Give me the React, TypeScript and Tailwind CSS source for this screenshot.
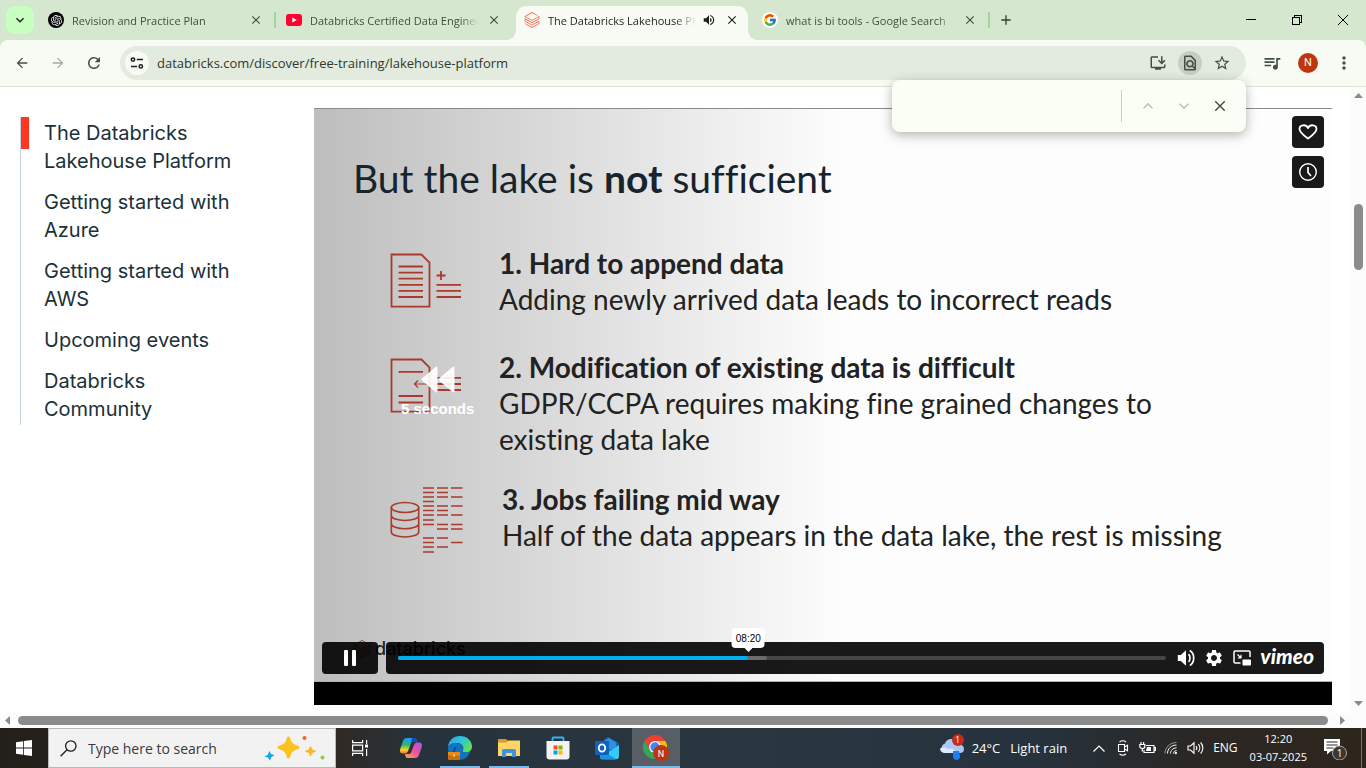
import React from "react";
import type { ReactNode } from "react";
import { FcGoogle } from "react-icons/fc";
import { SiDatabricks, SiOpenai } from "react-icons/si";
import {
  MdArrowBack,
  MdArrowForward,
  MdClose,
  MdInstallDesktop,
  MdKeyboardArrowDown,
  MdKeyboardArrowUp,
  MdMoreVert,
  MdOutlineFindInPage,
  MdQueueMusic,
  MdRefresh,
  MdSettings,
  MdStarBorder,
  MdVolumeUp,
  MdAdd,
} from "react-icons/md";

const UI_FONT = "font-['Open_Sans','Noto_Sans',sans-serif]";

type TabProps = {
  icon: ReactNode;
  title: string;
  active?: boolean;
  audio?: boolean;
  divider?: boolean;
};

function Tab({ icon, title, active, audio, divider }: TabProps) {
  return (
    <div className="flex h-[34px] max-w-[238px] min-w-0 flex-1 items-center">
      <div
        className={
          active
            ? "relative flex h-full min-w-0 flex-1 items-center rounded-t-[10px] bg-[#f8fbf3] pr-2 pl-2 text-[#1c211b]"
            : "relative flex h-full min-w-0 flex-1 items-center pr-2 pb-1.5 pl-2 text-[#41503f]"
        }
      >
        {active && (
          <>
            <span className="absolute bottom-0 -left-2.5 size-2.5 bg-[radial-gradient(circle_at_0_0,transparent_10px,#f8fbf3_10px)]" />
            <span className="absolute -right-2.5 bottom-0 size-2.5 bg-[radial-gradient(circle_at_100%_0,transparent_10px,#f8fbf3_10px)]" />
          </>
        )}
        <span className={active ? "mb-1.5 flex size-4 shrink-0 items-center justify-center" : "flex size-4 shrink-0 items-center justify-center"}>
          {icon}
        </span>
        <span
          className={
            active
              ? "mb-1 ml-2 min-w-0 flex-1 overflow-hidden text-[11px] leading-4 whitespace-nowrap [mask-image:linear-gradient(to_right,black_86%,transparent)]"
              : "ml-2 min-w-0 flex-1 overflow-hidden pt-0.5 text-[11px] leading-4 whitespace-nowrap [mask-image:linear-gradient(to_right,black_90%,transparent)]"
          }
        >
          {title}
        </span>
        {audio && <MdVolumeUp className="mb-1.5 ml-1.5 size-3.5 shrink-0" />}
        <button
          aria-label={`Close ${title}`}
          className={active ? "mb-1.5 ml-2 flex size-4 shrink-0 items-center justify-center" : "ml-2 flex size-4 shrink-0 items-center justify-center"}
        >
          <MdClose className="size-3.5" />
        </button>
      </div>
      <span className={divider ? "mr-0.5 mb-1.5 ml-0.5 h-4 w-0.5 bg-[#a0d997]" : "w-1.5"} />
    </div>
  );
}

function TabStrip() {
  return (
    <div className="flex h-10 shrink-0 items-end bg-[#d6e7d0] pl-1.5">
      <button aria-label="Search tabs" className="mr-1.5 mb-1.5 flex size-7 shrink-0 items-center justify-center rounded-[9px] bg-[#c8ffc0] text-[#1c211b]">
        <MdKeyboardArrowDown className="size-4" />
      </button>
      <Tab
        title="Revision and Practice Plan"
        divider
        icon={
          <span className="flex size-4 items-center justify-center rounded-full bg-black text-white">
            <SiOpenai className="size-[11px]" />
          </span>
        }
      />
      <Tab
        title="Databricks Certified Data Engineer"
        icon={
          <svg viewBox="0 0 16 12" className="h-3 w-4">
            <rect width="16" height="12" rx="3" fill="#ff0033" />
            <path d="M6.3 3.4v5.2L10.8 6z" fill="#fff" />
          </svg>
        }
      />
      <Tab title="The Databricks Lakehouse Platform" active audio icon={<SiDatabricks className="size-4 text-[#ff5f46]" />} />
      <Tab
        title="what is bi tools - Google Search"
        divider
        icon={
          <span className="flex size-4 items-center justify-center rounded-full bg-white">
            <FcGoogle className="size-3.5" />
          </span>
        }
      />
      <button aria-label="New tab" className="mb-1.5 flex size-7 shrink-0 items-center justify-center text-[#33402f]">
        <MdAdd className="size-4" />
      </button>
      <div className="ml-auto flex self-stretch">
        <button aria-label="Minimize" className="flex w-[46px] items-center justify-center">
          <svg viewBox="0 0 10 10" className="size-2.5" shapeRendering="crispEdges">
            <path d="M0 4.5h10" stroke="#000" fill="none" />
          </svg>
        </button>
        <button aria-label="Restore" className="flex w-[46px] items-center justify-center">
          <svg viewBox="0 0 10 10" className="size-2.5" shapeRendering="crispEdges">
            <path d="M.5 2.5h7v7h-7zM2.5 2.5v-2h7v7h-2" stroke="#000" fill="none" />
          </svg>
        </button>
        <button aria-label="Close window" className="flex w-[46px] items-center justify-center">
          <svg viewBox="0 0 10 10" className="size-2.5">
            <path d="M0 0l10 10M10 0L0 10" stroke="#000" fill="none" />
          </svg>
        </button>
      </div>
    </div>
  );
}

function FindBar() {
  return (
    <div className="absolute top-10 right-[120px] z-20 flex h-[52px] w-[354px] items-center rounded-lg bg-[#fbfef5] pr-2 shadow-[0_3px_12px_rgba(0,0,0,0.3)]">
      <input aria-label="Find in page" className="h-8 min-w-0 flex-1 bg-transparent px-4 text-xs outline-none" />
      <span className="mr-2 h-8 w-px bg-[#a9e5a2]" />
      <button aria-label="Previous match" className="flex size-9 items-center justify-center text-[#bdc2ba]">
        <MdKeyboardArrowUp className="size-5" />
      </button>
      <button aria-label="Next match" className="flex size-9 items-center justify-center text-[#bdc2ba]">
        <MdKeyboardArrowDown className="size-5" />
      </button>
      <button aria-label="Close find bar" className="flex size-9 items-center justify-center text-[#4c514a]">
        <MdClose className="size-[18px]" />
      </button>
    </div>
  );
}

function Toolbar() {
  return (
    <div className="bg-[#d6e7d0]">
      <div className="relative flex h-[47px] shrink-0 items-center rounded-t-lg border-b border-[#d6e7d0] bg-[#f8fbf3] pl-1 text-[#41503f]">
        <button aria-label="Back" className="flex size-9 items-center justify-center">
          <MdArrowBack className="size-4" />
        </button>
        <button aria-label="Forward" className="flex size-9 items-center justify-center text-[#a5aca2]">
          <MdArrowForward className="size-4" />
        </button>
        <button aria-label="Reload" className="flex size-9 items-center justify-center">
          <MdRefresh className="size-[18px]" />
        </button>
        <div className="ml-2 flex h-[34px] min-w-0 flex-1 items-center rounded-full bg-[#e3ebdf] pr-2 pl-[5px]">
          <button aria-label="View site information" className="flex size-6 shrink-0 items-center justify-center rounded-full bg-[#f8fbf3] text-[#1c211b]">
            <svg viewBox="0 0 14 14" className="size-3.5" fill="none" stroke="currentColor" strokeWidth="1.5">
              <circle cx="3" cy="3.6" r="1.7" />
              <path d="M6.8 3.6H13M1 10.4h6" />
              <circle cx="10.8" cy="10.4" r="1.7" />
            </svg>
          </button>
          <input
            aria-label="Address"
            defaultValue="databricks.com/discover/free-training/lakehouse-platform"
            className="ml-2 min-w-0 flex-1 bg-transparent pt-px text-[13px] text-[#30382e] outline-none"
          />
          <button aria-label="Install page as app" className="flex size-8 items-center justify-center">
            <MdInstallDesktop className="size-[18px]" />
          </button>
          <button aria-label="Find" className="flex size-8 items-center justify-center">
            <span className="flex size-6 items-center justify-center rounded-full bg-[#c6cec2]">
              <MdOutlineFindInPage className="size-[18px]" />
            </span>
          </button>
          <button aria-label="Bookmark" className="flex size-8 items-center justify-center">
            <MdStarBorder className="size-[18px]" />
          </button>
        </div>
        <button aria-label="Media controls" className="ml-2 flex size-9 items-center justify-center">
          <MdQueueMusic className="size-5" />
        </button>
        <button aria-label="Profile" className="flex size-9 items-center justify-center">
          <span className="flex size-5 items-center justify-center rounded-full bg-[#bf360c] font-['Roboto',sans-serif] text-[11px] text-white">N</span>
        </button>
        <button aria-label="Menu" className="mr-1 flex size-9 items-center justify-center">
          <MdMoreVert className="size-5" />
        </button>
        <FindBar />
      </div>
    </div>
  );
}

const SECTIONS = [
  ["The Databricks", "Lakehouse Platform"],
  ["Getting started with", "Azure"],
  ["Getting started with", "AWS"],
  ["Upcoming events"],
  ["Databricks", "Community"],
];

function SideNav() {
  return (
    <nav className="w-[314px] shrink-0 pt-[30px] pl-5">
      <ul className="relative flex flex-col gap-[13px] border-l border-[#c4d6e0] pt-0.5 pb-0.5 pl-[23px] font-['Inter',sans-serif] text-[20px] leading-7 text-[#1b3139]">
        <li className="absolute top-0 left-0 h-8 w-2 bg-[#ff3621]" aria-hidden="true" />
        {SECTIONS.map((lines, i) => (
          <li key={i}>
            <a href="#section">
              {lines.map((line) => (
                <span key={line} className="block">
                  {line}
                </span>
              ))}
            </a>
          </li>
        ))}
      </ul>
    </nav>
  );
}

function AppendIcon() {
  return (
    <svg viewBox="0 0 74 57" className="h-[57px] w-[74px]" fill="none" stroke="#a93a2c" strokeWidth="1.8">
      <path d="M1.5 1.5h30l8 8v44.200h-38z" />
      <path d="M8.500 13.500h24.500M8.500 19.600h24.500M8.500 25.700h24.500M8.500 31.800h24.500M8.500 37.900h24.500M8.500 44h24.500M46.500 31.800h24.500M46.500 37.900h24.500M46.500 44h24.500M46.500 22.500h9M51 18v9" />
    </svg>
  );
}

function ModifyIcon() {
  return (
    <svg viewBox="0 0 74 57" className="h-[57px] w-[74px]" fill="none" stroke="#a93a2c" strokeWidth="1.8">
      <path d="M1.500 1.500h30l8 8v44.200h-38z" />
      <path d="M8.500 13.800h24.500M8.500 38h24.500M8.500 44.500h24.500M46.500 19.800h24.500M46.500 26h24.500M46.500 32h24.500" />
      <path d="M25 26h21M28 22.500L24.500 26l3.500 3.500" strokeWidth="1.200" />
    </svg>
  );
}

function JobsIcon() {
  return (
    <svg viewBox="0 0 74 68" className="h-[68px] w-[74px]" fill="none" stroke="#a93a2c" strokeWidth="1.600">
      <ellipse cx="15" cy="21.500" rx="13.700" ry="5" />
      <path d="M1.300 21.500v24.500c0 2.800 6 5 13.700 5s13.700-2.200 13.700-5V21.500M1.300 29.500c0 2.800 6 5 13.700 5s13.700-2.200 13.700-5M1.300 37.800c0 2.800 6 5 13.700 5s13.700-2.200 13.700-5" />
      <path d="M33 2h11M33 6.500h11M33 11h11M33 15.500h11M33 20h11M33 24.500h11M33 29h11M33 34h11M33 38.500h11M33 52h11M33 56.500h11M33 61h11M33 66h11" />
      <path d="M47 2h11M47 6.500h11M47 11h11M47 20h11M47 24.500h11M47 29h11M47 38.500h11M47 43h11M47 52h11M47 61h11" />
      <path d="M61 2h11.500M61 11h11.500M61 20h11.500M61 29h11.500M61 38.500h11.500M61 43h11.500M61 56.500h11.500" />
    </svg>
  );
}

function Controls() {
  return (
    <div className="relative z-10 flex h-8 gap-2 px-2">
      <button aria-label="Pause" className="flex w-14 items-center justify-center rounded bg-black/90">
        <svg viewBox="0 0 12 16" className="h-4 w-3" fill="#fff">
          <rect width="4" height="16" rx="1" />
          <rect x="8" width="4" height="16" rx="1" />
        </svg>
      </button>
      <div className="flex flex-1 items-center rounded bg-black/90 pr-2.5 pl-3 text-white">
        <div className="relative h-1 flex-1 rounded-full bg-[#464646]">
          <div className="absolute inset-y-0 left-0 w-[48%] rounded-full bg-[#6b6b6b]" />
          <div className="absolute inset-y-0 left-0 w-[45.6%] rounded-full bg-[#00adef]">
            <div className="absolute right-0 bottom-2 flex translate-x-1/2 flex-col items-center">
              <span className="flex h-5 items-center rounded bg-white px-1 font-['Liberation_Sans',sans-serif] text-[10px] text-black">08:20</span>
              <svg viewBox="0 0 8 4" className="h-1 w-2" fill="#fff">
                <path d="M0 0h8L4 4z" />
              </svg>
            </div>
          </div>
          <input type="range" min={0} max={1097} defaultValue={500} aria-label="Seek" className="absolute inset-0 h-full w-full cursor-pointer opacity-0" />
        </div>
        <button aria-label="Volume" className="ml-2.5 flex size-5 items-center justify-center">
          <svg viewBox="0 0 18 18" className="size-[18px]" fill="none">
            <path d="M.8 6h3L9 1.200v15.600L3.800 12h-3z" fill="#fff" />
            <path d="M11.500 5.200c2 1.500 2 6.100 0 7.600M12.800 1.500c5.200 3 5.200 12 0 15" stroke="#fff" strokeWidth="1.700" />
          </svg>
        </button>
        <button aria-label="Settings" className="ml-2 flex size-5 items-center justify-center">
          <MdSettings className="size-5" />
        </button>
        <button aria-label="Picture in picture" className="ml-2 flex size-5 items-center justify-center">
          <svg viewBox="0 0 18 16" className="h-4 w-[18px]" fill="none" stroke="#fff" strokeWidth="1.500">
            <path d="M7.500 13H2.200C1.300 13 1 12.600 1 12V2c0-.6.400-1 1-1h14c.6 0 1 .4 1 1v5" />
            <path d="M4.500 4.500L8 8M8 4.800V8H4.800" strokeWidth="1.200" />
            <rect x="9.500" y="9.500" width="8.500" height="6" rx=".8" fill="#fff" stroke="none" />
          </svg>
        </button>
        <a href="#vimeo" className="ml-2 pb-1 font-['Lato',sans-serif] text-[21px] leading-6 font-black italic">
          vimeo
        </a>
      </div>
    </div>
  );
}

function Slide() {
  return (
    <div className="relative border-t border-b border-t-[#8a8a8a] border-b-[#b0b0b0] bg-[#fdfdfd] bg-[linear-gradient(to_right,rgba(0,0,0,0.25),transparent_52%)] pb-[7px] font-['Lato',sans-serif] text-[#222] [font-variant-ligatures:none]">
      <div className="pt-[45px] pl-[39px]">
        <h1 className="text-[39px] leading-[48px] text-[#17242b]">
          But the lake is <strong className="font-bold">not</strong> sufficient
        </h1>
      </div>
      <div className="flex flex-col pt-[43px] pl-[76px] text-[28px] leading-9">
        <div className="flex">
          <div className="w-[109px] shrink-0 pt-2">
            <AppendIcon />
          </div>
          <div>
            <h2 className="font-bold">1. Hard to append data</h2>
            <p>Adding newly arrived data leads to incorrect reads</p>
          </div>
        </div>
        <div className="mt-8 flex">
          <div className="relative w-[109px] shrink-0 pt-[9px]">
            <ModifyIcon />
            <div className="absolute top-[17px] left-[11px] flex flex-col items-center text-white">
              <svg viewBox="0 0 34 27" className="h-[27px] w-[34px]" fill="#fff" stroke="#fff" strokeWidth="2" strokeLinejoin="round">
                <path d="M15.500 1.500v24L1.200 13.500zM32.500 1.500v24L18.200 13.500z" fillOpacity=".9" strokeOpacity=".9" />
              </svg>
              <span className="mt-1 font-['Liberation_Sans',sans-serif] text-[15px] leading-6 font-bold whitespace-nowrap">5 seconds</span>
            </div>
          </div>
          <div>
            <h2 className="font-bold">2. Modification of existing data is difficult</h2>
            <p>
              GDPR/CCPA requires making fine grained changes to
              <br />
              existing data lake
            </p>
          </div>
        </div>
        <div className="mt-6 flex">
          <div className="w-28 shrink-0 pt-[5px]">
            <JobsIcon />
          </div>
          <div>
            <h2 className="font-bold">3. Jobs failing mid way</h2>
            <p>Half of the data appears in the data lake, the rest is missing</p>
          </div>
        </div>
      </div>
      <div className="absolute bottom-5 left-[39px] flex items-center gap-1 font-['Inter',sans-serif] text-[18px] leading-6 font-medium">
        <SiDatabricks className="size-[18px] text-[#a93a2c]" />
        databricks
      </div>
      <div className="pt-[88px]">
        <Controls />
      </div>
      <div className="absolute top-[7px] right-2 flex flex-col gap-2">
        <button aria-label="Like" className="flex size-8 items-center justify-center rounded bg-black/90">
          <svg viewBox="0 0 20 16" className="h-4 w-5" fill="none" stroke="#fff" strokeWidth="1.800" strokeLinejoin="round">
            <path d="M10 14.500C6 11.500 1.500 8.500 1.500 5c0-4.500 6.500-5 8.500-1 2-4 8.500-3.500 8.500 1 0 3.500-4.500 6.500-8.500 9.500z" />
          </svg>
        </button>
        <button aria-label="Watch later" className="flex size-8 items-center justify-center rounded bg-black/90">
          <svg viewBox="0 0 20 20" className="size-5" fill="none" stroke="#fff">
            <circle cx="10" cy="10" r="8.300" strokeWidth="1.400" />
            <path d="M10 5v5.500l3 3.500" strokeWidth="1.700" />
          </svg>
        </button>
      </div>
    </div>
  );
}

function Page() {
  return (
    <div className="flex min-h-0 flex-1">
      <div className="flex min-w-0 flex-1 flex-col">
        <main className="flex min-h-0 flex-1 overflow-hidden bg-white">
          <SideNav />
          <section aria-label="Video" className="mr-[19px] min-w-0 flex-1 pt-[21px]">
            <Slide />
            <div className="h-[23px] bg-black" />
          </section>
        </main>
        <div className="flex h-[15px] shrink-0 items-center bg-[#fcfcfc] pr-1.5 pl-[5px]">
          <svg viewBox="0 0 5 9" className="h-[9px] w-[5px]" fill="#8b8b8b">
            <path d="M5 0v9L0 4.500z" />
          </svg>
          <div className="mr-3 ml-2 h-[9px] flex-1 rounded-full bg-[#8b8b8b]" />
          <svg viewBox="0 0 5 9" className="h-[9px] w-[5px]" fill="#8b8b8b">
            <path d="M0 0v9l5-4.500z" />
          </svg>
        </div>
      </div>
      <div className="flex w-[15px] shrink-0 flex-col items-center bg-[#fcfcfc] pt-1.5 pb-[22px]">
        <svg viewBox="0 0 9 5" className="h-[5px] w-[9px]" fill="#8b8b8b">
          <path d="M0 5h9L4.500 0z" />
        </svg>
        <div className="mt-[106px] h-[66px] w-[9px] rounded-full bg-[#8b8b8b]" />
        <svg viewBox="0 0 9 5" className="mt-auto h-[5px] w-[9px]" fill="#8b8b8b">
          <path d="M0 0h9L4.500 5z" />
        </svg>
      </div>
    </div>
  );
}

function TaskButton({ label, open, current, children }: { label: string; open?: boolean; current?: boolean; children: ReactNode }) {
  return (
    <button
      aria-label={label}
      className={
        current
          ? "relative flex w-12 items-center justify-center border-b-2 border-[#76b9ed] bg-[#575e66] pt-0.5"
          : "relative flex w-12 items-center justify-center"
      }
    >
      {children}
      {open && <span className="absolute inset-x-1 bottom-0 h-0.5 bg-[#76b9ed]" />}
    </button>
  );
}

function TaskbarIcons() {
  return (
    <div className="flex">
      <TaskButton label="Task view">
        <svg viewBox="0 0 16 16" className="size-4" fill="none" stroke="#fff" strokeWidth="1.200">
          <path d="M.6 0v2.600h10V0M.6 16v-2.600h10V16M.6 5.200h10v5.600H.6zM14.600 0v4M14.600 9v7" />
          <path d="M13 4.500h3v3h-3z" fill="#fff" stroke="none" />
        </svg>
      </TaskButton>
      <div className="ml-[3px] flex gap-px">
        <TaskButton label="Copilot">
          <svg viewBox="0 0 24 24" className="size-6">
            <defs>
              <linearGradient id="cpA" x1="0" y1="0" x2="0" y2="1">
                <stop offset="0" stopColor="#1aa0f5" />
                <stop offset=".45" stopColor="#2bb673" />
                <stop offset=".75" stopColor="#f5d327" />
                <stop offset="1" stopColor="#f37a2b" />
              </linearGradient>
              <linearGradient id="cpB" x1="1" y1="0" x2="0" y2="1">
                <stop offset="0" stopColor="#9a5cf5" />
                <stop offset=".5" stopColor="#f0509a" />
                <stop offset="1" stopColor="#ffb040" />
              </linearGradient>
            </defs>
            <path d="M8 2h7c2 0 2.500 1.500 3 4h-4c-1.500 0-2 1-2.500 2.500L9 15c-.6 1.600-1.500 2.500-3 2.500H4C1.500 17.500.5 16 1.200 13L4 5c.7-2 1.800-3 4-3z" fill="url(#cpA)" />
            <path d="M13 2h2c2 0 2.500 1.500 3 4h-4c-1.500 0-2 1-2.500 2z" fill="#1649c8" />
            <path d="M16 22H9c-2 0-2.500-1.500-3-4h4c1.500 0 2-1 2.500-2.500L15 9c.6-1.600 1.500-2.500 3-2.500h2c2.500 0 3.500 1.500 2.800 4.500L20 19c-.7 2-1.800 3-4 3z" fill="url(#cpB)" />
          </svg>
        </TaskButton>
        <TaskButton label="Microsoft Edge" open>
          <svg viewBox="0 0 24 24" className="size-6">
            <defs>
              <linearGradient id="edA" x1="0" y1="0" x2="1" y2=".5">
                <stop offset="0" stopColor="#2aa7e8" />
                <stop offset=".6" stopColor="#2fc6d6" />
                <stop offset="1" stopColor="#5fe05a" />
              </linearGradient>
            </defs>
            <path d="M0 11C.500 4.500 5.500 0 12 0c7 0 12 5 12 10.500 0 4-3 6-6 6-2.500 0-4-1-3.500-2 .8-1 .8-1.500.8-2.500 0-3-3-5-7-5C4.500 7 1.500 8.500 0 11z" fill="url(#edA)" />
            <path d="M0 11c1.500-3 4.500-4.200 8-4 4 .2 7 2 7 5 0 1-.2 1.500-.8 2.200-.3 1 1.300 2.300 3.800 2.300 1.500 0 3-.3 4.300-1.500C20.500 20.500 17 24 11.500 24 5 24-.5 18.500 0 11z" fill="#1273c4" />
            <path d="M9 10.500c-3 2.500-2.500 10 4 13.400C6 24 3.500 19 4.500 15c.6-2.500 2.500-4.200 4.500-4.500z" fill="#0d4f96" />
            <rect y="16" width="12" height="8" rx="1" fill="#c96f0c" />
            <path d="M0 16h12v3.500H0z" fill="#e68a18" />
            <path d="M5 18.500h2v2H5z" fill="#ffd14a" />
          </svg>
        </TaskButton>
        <TaskButton label="File Explorer" open>
          <svg viewBox="0 0 22 18" className="h-[18px] w-[22px]">
            <path d="M0 0h8l2 2v3H0z" fill="#dd9a16" />
            <path d="M0 3.500h8.500l1.500-2h12V17H0z" fill="#ffd666" />
            <path d="M4 18v-6c0-1.200.8-2 2-2h10c1.200 0 2 .8 2 2v6h-4v-4H8v4z" fill="#3f94dd" />
          </svg>
        </TaskButton>
        <TaskButton label="Microsoft Store">
          <svg viewBox="0 0 24 24" className="size-6">
            <path d="M6.500 6V2.500c0-.6.400-1 1-1h9c.6 0 1 .4 1 1V6" fill="none" stroke="#35b4ee" strokeWidth="1.800" />
            <path d="M.5 5h23v15.500c0 1.700-1 3-3 3h-17c-2 0-3-1.300-3-3z" fill="#f3f3f3" />
            <path d="M7.500 9.500h4v4h-4z" fill="#f25022" />
            <path d="M12.500 9.500h4v4h-4z" fill="#7fba00" />
            <path d="M7.500 14.500h4v4h-4z" fill="#00a4ef" />
            <path d="M12.500 14.500h4v4h-4z" fill="#ffb900" />
          </svg>
        </TaskButton>
        <TaskButton label="Outlook">
          <svg viewBox="0 0 24 24" className="size-6">
            <path d="M4 8L13 1l10.500 6v4L14 18 4 12z" fill="#1668bd" />
            <path d="M8 5.500l6-3.500 7 4.500v7H8z" fill="#2f8fe0" />
            <path d="M5 21.500L24 9v11c0 2-1 3.300-3 3.300H7.500c-1.500 0-2.500-.8-2.500-1.800z" fill="#38c8f5" />
            <path d="M5 13l16 10.200c-.5.300-12 .3-13.500.1-1.500 0-2.500-.8-2.500-1.800z" fill="#1a94e0" />
            <rect y="5" width="14" height="14" rx="1" fill="#0f62b8" />
            <ellipse cx="7" cy="12" rx="3.200" ry="3.700" fill="none" stroke="#fff" strokeWidth="1.800" />
          </svg>
        </TaskButton>
        <TaskButton label="Google Chrome" current>
          <svg viewBox="0 0 26 26" className="size-[26px]">
            <path d="M1.600 6A12 12 0 0 1 22.400 6H12a6 6 0 0 0-5.200 9z" fill="#ea4335" />
            <path d="M22.400 6A12 12 0 0 1 12 24l5.200-9A6 6 0 0 0 12 6z" fill="#fbbc04" />
            <path d="M12 24A12 12 0 0 1 1.600 6l5.200 9a6 6 0 0 0 8.400 2.200z" fill="#34a853" />
            <circle cx="12" cy="12" r="6" fill="#fff" />
            <circle cx="12" cy="12" r="4.700" fill="#4285f4" />
            <circle cx="18" cy="18" r="8" fill="#bf360c" />
            <text x="18" y="21.500" textAnchor="middle" fontSize="9" fontFamily="Roboto, sans-serif" fill="#fff">
              N
            </text>
          </svg>
        </TaskButton>
      </div>
    </div>
  );
}

function Tray() {
  return (
    <div className="ml-auto flex items-center text-white">
      <button aria-label="Weather" className="flex items-center">
        <span className="relative mr-2 flex">
          <svg viewBox="0 0 24 24" className="size-6">
            <path d="M5 17a5 5 0 0 1 0-9.500C6 4 9 2.500 12 3c3 .3 5 2.500 5.500 5 4 0 6.500 2 6.500 5s-2 4-4 4z" fill="#a9c8f8" />
            <path d="M4 17c-3-.5-4-2.500-4-4.500 3-2 7-1 8.500 1 2-2 6-1.500 7.500 3.500z" fill="#dbe8fd" />
            <path d="M13 15l6 0 1 5c.3 2.500-1.500 4-3.500 4S13 22.500 13 20z" fill="#1f7df0" />
          </svg>
          <span className="absolute -top-0.5 right-0 flex size-3 items-center justify-center rounded-full bg-[#c42b1c] text-[9px] leading-3">1</span>
        </span>
        <span className="text-[13px] leading-5">24°C</span>
        <span className="ml-2.5 text-[13px] leading-5">Light rain</span>
      </button>
      <button aria-label="Show hidden icons" className="ml-5 flex w-6 justify-center">
        <svg viewBox="0 0 12 7" className="h-[7px] w-3" fill="none" stroke="#fff" strokeWidth="1.200">
          <path d="M.5 6.500L6 1l5.500 5.500" />
        </svg>
      </button>
      <button aria-label="Meet now" className="flex w-6 justify-center">
        <svg viewBox="0 0 12 16" className="h-4 w-3" fill="none" stroke="#fff" strokeWidth="1.100">
          <path d="M1.500 4.500h6v7h-6zM7.500 7l3-1.800v5.600l-3-1.800M2.500 2c2-1.500 4.500-1.500 6.500 0M2.500 14c2 1.500 4.500 1.500 6.500 0" />
        </svg>
      </button>
      <button aria-label="Battery" className="flex w-6 justify-center">
        <svg viewBox="0 0 17 14" className="h-3.5 w-[17px]" fill="none" stroke="#fff" strokeWidth="1.200">
          <path d="M7 4.500h8v7H5V9M15 6.500h1.400v3H15" />
          <path d="M8 6h4v4H7z" fill="#fff" stroke="none" />
          <path d="M.8 3.500h5v2c0 1-.8 2-2.500 2s-2.500-1-2.500-2zM2 3.500V1M4.600 3.500V1M3.300 7.500v3" />
        </svg>
      </button>
      <button aria-label="Network" className="flex w-6 justify-center">
        <svg viewBox="0 0 14 14" className="size-3.5" fill="none" stroke="#fff" strokeWidth="1">
          <path d="M1 12.500C1 6.500 6 1.500 12.500 1.500" opacity=".5" />
          <path d="M3.500 12.500c0-4.500 3.500-8.300 9-8.500M6.500 12.500c0-3 2.500-5.500 6-5.700M9.300 12.500c0-1.500 1.400-2.800 3.200-3" />
          <circle cx="11.800" cy="12" r="1.200" fill="#fff" stroke="none" />
        </svg>
      </button>
      <button aria-label="Speakers" className="flex w-6 justify-center">
        <svg viewBox="0 0 17 14" className="h-3.5 w-[17px]" fill="none" stroke="#fff" strokeWidth="1.100">
          <path d="M1 5h2.500L7 1.800v10.400L3.500 9H1zM9 5c1 1.200 1 2.800 0 4M11.300 3.200c2 2.200 2 5.400 0 7.600M13.600 1.500c3 3.200 3 7.800 0 11" />
        </svg>
      </button>
      <button className="ml-1.5 text-[12px] leading-4">ENG</button>
      <button className="ml-3 flex flex-col items-center text-[11px] leading-[18px]">
        <span>12:20</span>
        <span>03-07-2025</span>
      </button>
      <button aria-label="Notifications" className="relative ml-4 flex w-6 justify-center">
        <svg viewBox="0 0 24 24" className="size-6">
          <path d="M1 3h16v12H8l-4 3.500V15H1z" fill="#fff" />
          <path d="M3.500 6h11M3.500 9h11M3.500 12h7" stroke="#2c2a28" strokeWidth="1.200" />
          <circle cx="16.500" cy="17" r="7" fill="#3a3836" stroke="#a8a6a4" strokeWidth="1" />
          <text x="16.500" y="20.700" textAnchor="middle" fontSize="10" fontFamily="Open Sans, sans-serif" fill="#fff">
            1
          </text>
        </svg>
      </button>
      <span className="mr-1 ml-3.5 h-10 w-px bg-[#77726c]" />
    </div>
  );
}

function Taskbar() {
  return (
    <footer className="flex h-10 shrink-0 items-stretch bg-[#26323c] bg-[linear-gradient(to_right,#231f1a_0%,#2f2a26_25%,#26333d_31%,#2a3640_55%,#26333e_75%,#2a2724_88%,#2e261d_100%)]">
      <button aria-label="Start" className="flex w-12 items-center justify-center">
        <svg viewBox="0 0 16 16" className="size-4" fill="#fff">
          <path d="M0 2.200L7.200 1.200v6.400H0zM8 1.100L16 0v7.600H8zM0 8.400h7.200v6.400L0 13.800zM8 8.400h8V16l-8-1.100z" />
        </svg>
      </button>
      <div className="flex w-72 items-center border border-[#b9b9b9] bg-[#f2f2f2] pr-[9px] pl-[11px]">
        <svg viewBox="0 0 17 17" className="size-[17px] shrink-0" fill="none" stroke="#1f1f1f" strokeWidth="1.300">
          <circle cx="10.800" cy="6" r="5.200" />
          <path d="M7 9.800L.6 16.200" />
        </svg>
        <input
          aria-label="Search Windows"
          placeholder="Type here to search"
          className="ml-[11px] w-0 min-w-0 flex-1 bg-transparent text-[14px] text-[#333] outline-none placeholder:text-[#3a3a3a]"
        />
        <svg viewBox="0 0 62 26" className="h-[26px] w-[62px] shrink-0">
          <path d="M24.500 3c1.600 6 3.500 7.800 9.500 9.500-6 1.700-7.900 3.500-9.500 9.500-1.600-6-3.500-7.800-9.500-9.500 6-1.700 7.900-3.500 9.500-9.500z" fill="#fcc21f" stroke="#fcc21f" strokeWidth="3" strokeLinejoin="round" />
          <path d="M46.500 12c.8 3 1.500 3.700 4.500 4.300-3 .7-3.700 1.300-4.500 4.300-.8-3-1.500-3.700-4.500-4.300 3-.6 3.700-1.300 4.500-4.300z" fill="#fbb829" stroke="#fbb829" strokeWidth="1.500" strokeLinejoin="round" />
          <path d="M5.500 16l1.500 3 3.500 1.200-3 1.800-1.500 3.500-2-3-3.500-.8 3.300-2z" fill="#12a5ee" />
          <circle cx="40.500" cy="3" r="2" fill="#f0642c" />
          <circle cx="58.500" cy="22.500" r="2" fill="#8ccf3f" />
        </svg>
      </div>
      <TaskbarIcons />
      <Tray />
    </footer>
  );
}

export default function App() {
  return (
    <div className={`flex h-screen flex-col overflow-hidden bg-white ${UI_FONT}`}>
      <TabStrip />
      <Toolbar />
      <Page />
      <Taskbar />
    </div>
  );
}
